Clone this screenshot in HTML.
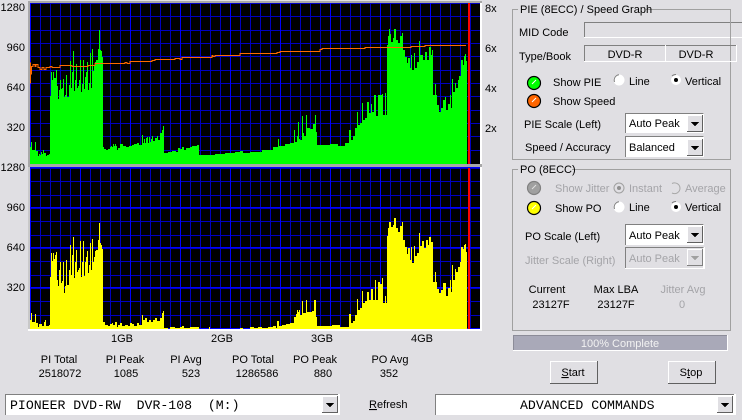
<!DOCTYPE html>
<html><head><meta charset="utf-8">
<style>
html,body{margin:0;padding:0;background:#e0dfe3;width:742px;height:420px;overflow:hidden}
svg{display:block}
text{font-family:"Liberation Sans",sans-serif;font-size:11px;fill:#000}
.m{text-anchor:middle}.g{fill:#a4a4a8}
.mono{font-family:"Liberation Mono",monospace;font-size:13.2px}
</style></head><body>
<svg width="742" height="420" viewBox="0 0 742 420" xmlns="http://www.w3.org/2000/svg" shape-rendering="crispEdges">
<defs>
<g id="gridh" stroke="#0000c0" stroke-width="1">
<path d="M30 .5H480M30 13.5H480M30 27.5H480M30 40.5H480M30 53.5H480M30 67.5H480M30 80.5H480M30 93.5H480M30 107.5H480M30 120.5H480M30 133.5H480M30 147.5H480"/>
</g>
<g id="gridv">
<path stroke="#0000c0" d="M40.5 0V161M50.5 0V161M60.5 0V161M70.5 0V161M90.5 0V161M100.5 0V161M110.5 0V161M120.5 0V161M140.5 0V161M150.5 0V161M160.5 0V161M170.5 0V161M190.5 0V161M200.5 0V161M210.5 0V161M220.5 0V161M240.5 0V161M250.5 0V161M260.5 0V161M270.5 0V161M290.5 0V161M300.5 0V161M310.5 0V161M320.5 0V161M340.5 0V161M350.5 0V161M360.5 0V161M370.5 0V161M390.5 0V161M400.5 0V161M410.5 0V161M420.5 0V161M440.5 0V161M450.5 0V161M460.5 0V161M470.5 0V161"/>
<path stroke="#0000ff" d="M30.5 0V161M80.5 0V161M130.5 0V161M180.5 0V161M230.5 0V161M280.5 0V161M330.5 0V161M380.5 0V161M430.5 0V161"/>
</g>
<g id="arrow">
<rect x="0" y="0" width="16" height="17" fill="#e0dfe3"/>
<path d="M0 .5H16M.5 0V17" stroke="#fff" fill="none"/>
<path d="M15.500 0V17M0 16.500H16" stroke="#606060" fill="none"/>
<path d="M4 7H12L8 11.500Z" fill="#000"/>
</g>
<g id="arrowd">
<rect x="0" y="0" width="16" height="17" fill="#e0dfe3"/>
<path d="M0 .5H16M.5 0V17" stroke="#fff" fill="none"/>
<path d="M15.500 0V17M0 16.500H16" stroke="#808080" fill="none"/>
<path d="M4 7H12L8 11.500Z" fill="#a0a0a0"/>
</g>
</defs>
<rect width="742" height="420" fill="#e0dfe3"/>

<!-- top chart -->
<rect x="28" y="1" width="454" height="166" fill="#a8a8a8"/>
<rect x="480" y="3" width="2" height="161" fill="#fff"/>
<rect x="30" y="3" width="450" height="161" fill="#000"/>
<use href="#gridh" y="3"/>
<use href="#gridv" y="3"/>
<path fill="#00ff00" d="M30 164V147H31V142H32V150H35V142H36V151H38V156H39V154H40V155H41V152H42V154H43V150H44V153H46V156H47V155H49V154H50V96H51V72H52V80H53V72H54V78H56V70H57V86H58V99H59V90H60V80H61V89H62V88H63V79H64V97H65V95H66V75H67V97H69V85H70V61H71V88H72V72H73V51H74V91H75V80H76V64H77V88H78V86H79V80H80V60H81V92H82V84H83V60H84V89H85V77H86V72H87V62H88V90H89V83H90V53H91V88H92V49H93V71H94V66H95V62H96V60H98V49H99V30H100V50H101V51H102V57H103V147H104V149H106V150H108V149H110V147H111V146H112V147H113V144H114V146H115V144H116V146H117V150H118V148H120V144H123V146H126V147H129V146H132V145H134V144H137V143H139V145H142V135H143V143H144V139H145V143H146V138H147V137H148V143H149V137H150V142H151V139H152V136H153V141H155V138H157V136H158V140H160V133H162V130H163V126H164V153H168V152H172V151H176V152H178V148H180V149H182V147H184V150H186V148H190V147H192V146H197V145H199V155H215V154H225V153H235V152H240V151H243V153H250V152H262V150H273V147H278V139H279V146H285V144H290V143H294V130H295V142H297V136H298V122H299V139H300V140H302V116H303V133H304V136H306V115H307V128H310V129H313V124H315V115H316V132H317V145H330V144H338V146H345V143H349V130H351V140H353V136H355V128H357V112H358V125H360V123H362V103H363V120H365V118H367V102H369V113H371V104H372V112H374V95H376V116H378V95H382V94H383V115H385V93H386V115H387V45H388V36H389V29H390V34H391V42H393V38H394V29H396V40H398V43H400V36H402V33H403V50H405V57H407V63H408V58H410V68H411V55H412V70H414V53H415V68H417V62H419V41H420V55H423V60H425V52H427V60H429V47H431V55H432V50H433V95H435V84H436V95H437V105H439V112H441V108H443V100H445V97H446V110H448V104H450V95H451V108H452V79H453V92H455V83H456V88H458V80H459V76H461V60H463V65H464V56H465V54H466V61H467V164Z"/>
<path fill="none" stroke="#ff6a00" stroke-width="1" transform="translate(0 .5)" d="M30.500 83V62M31.500 74V66H33V64H35V66H36V64H38V67H40V69H42V67H44V69H46V67H50V66H52V67H60V65H72V66H88V65H95V63H125V62H127V63H130V61H152V60H155V59H175V58H180V59H182V57H212V55H213V56H215V55H240V53H277V52H280V51H320V49H322V48H365V47H411V46H425V45H466"/>
<rect x="468" y="3" width="2" height="161" fill="#ff0000"/>

<!-- bottom chart -->
<rect x="28" y="167" width="454" height="164" fill="#fff"/>
<rect x="28" y="167" width="2" height="162" fill="#c8c8c8"/>
<rect x="30" y="167" width="450" height="162" fill="#000"/>
<use href="#gridh" y="168"/>
<use href="#gridv" y="167"/>
<path stroke="#0000ff" d="M30 207.500H480M30 247.500H480M30 287.500H480M30 328.500H480M30 167.500H480"/>
<path fill="#ffff00" d="M30 329V320H31V313H32V322H35V314H36V323H38V327H39V324H42V326H44V322H45V320H46V326H49V325H50V277H51V253H52V261H53V253H54V259H55V255H56V252H57V280H58V286H59V270H60V262H61V283H62V281H63V262H64V293H65V286H66V260H67V285H69V270H70V245H71V275H72V255H73V237H74V278H75V262H76V250H77V272H78V270H79V268H80V241H81V277H82V262H83V241H84V276H85V262H86V257H87V251H88V273H89V265H90V243H91V270H92V239H93V262H94V257H95V251H96V250H98V240H99V223H100V243H101V245H102V249H103V322H105V325H108V326H110V324H112V323H113V325H115V322H117V327H118V325H120V323H122V326H125V325H128V326H130V323H132V324H134V326H137V323H139V325H142V315H143V320H145V318H147V322H149V320H151V322H153V320H155V318H157V321H160V318H162V313H163V311H164V328H168V329H170V327H175V328H180V327H182V326H184V328H190V327H199V329H209V327H210V329H240V328H243V329H250V327H254V328H258V327H262V328H268V327H273V326H276V328H277V321H279V326H282V325H286V324H290V323H294V317H296V314H297V310H298V312H299V310H300V315H302V301H303V313H306V300H307V312H312V311H314V300H316V317H317V326H332V325H340V327H349V314H351V323H353V321H355V315H357V299H358V310H360V308H362V291H363V303H365V301H367V292H369V300H371V289H373V300H375V280H376V300H378V282H380V284H382V278H383V303H385V296H386V303H387V236H388V228H389V222H391V227H393V225H394V218H396V228H398V232H400V226H402V222H403V240H405V247H407V254H408V248H410V260H411V247H412V263H414V246H415V256H417V253H419V233H420V246H422V241H424V248H426V240H428V245H429V237H431V242H433V282H435V272H436V282H437V289H439V293H441V290H443V283H446V296H448V288H450V280H451V292H452V265H453V280H455V269H456V272H458V267H460V262H461V247H463V249H464V245H465V244H466V252H467V329Z"/>
<rect x="468" y="168" width="2" height="161" fill="#ff0000"/>

<!-- axis labels -->
<text x="25" y="11" text-anchor="end">1280</text>
<text x="25" y="51" text-anchor="end">960</text>
<text x="25" y="91" text-anchor="end">640</text>
<text x="25" y="131" text-anchor="end">320</text>
<text x="25" y="171" text-anchor="end">1280</text>
<text x="25" y="211" text-anchor="end">960</text>
<text x="25" y="251" text-anchor="end">640</text>
<text x="25" y="291" text-anchor="end">320</text>
<text x="485" y="12">8x</text>
<text x="485" y="52">6x</text>
<text x="485" y="92">4x</text>
<text x="485" y="132">2x</text>
<text class="m" x="122" y="342">1GB</text>
<text class="m" x="222" y="342">2GB</text>
<text class="m" x="322" y="342">3GB</text>
<text class="m" x="422" y="342">4GB</text>

<!-- stats -->
<text class="m" x="59" y="363">PI Total</text><text class="m" x="60" y="377">2518072</text>
<text class="m" x="125" y="363">PI Peak</text><text class="m" x="126" y="377">1085</text>
<text class="m" x="186" y="363">PI Avg</text><text class="m" x="191" y="377">523</text>
<text class="m" x="253" y="363">PO Total</text><text class="m" x="257" y="377">1286586</text>
<text class="m" x="315" y="363">PO Peak</text><text class="m" x="323" y="377">880</text>
<text class="m" x="390" y="363">PO Avg</text><text class="m" x="389" y="377">352</text>

<!-- PIE group -->
<rect x="512.500" y="9.500" width="218" height="150" fill="none" stroke="#a0a0a0"/>
<rect x="518" y="3" width="128" height="12" fill="#e0dfe3"/>
<text x="520" y="13">PIE (8ECC) / Speed Graph</text>
<text x="519" y="36">MID Code</text>
<rect x="584" y="22" width="158" height="16" fill="#e0dfe3"/>
<path d="M584.500 38V22.500H742" fill="none" stroke="#808080"/>
<path d="M584 37.500H742" stroke="#fff"/>
<path d="M730.500 22V38" stroke="#a0a0a0"/>
<text x="519" y="60">Type/Book</text>
<rect x="584" y="45" width="81" height="17" fill="#e0dfe3"/>
<path d="M584.500 62V45.500H665" fill="none" stroke="#808080"/>
<path d="M584 61.500H665.500V45" fill="none" stroke="#fff"/>
<path d="M666 45.500H736" stroke="#808080"/>
<path d="M666 61.500H736.500V45" fill="none" stroke="#fff"/>
<text class="m" x="625" y="58">DVD-R</text>
<text class="m" x="696" y="58">DVD-R</text>

<g shape-rendering="geometricPrecision">
<circle cx="534" cy="83" r="6.500" fill="#00ff00" stroke="#000" stroke-width="1.200"/><path d="M532 84L536 80" stroke="#fff" stroke-width="1"/>
<circle cx="534" cy="101" r="6.500" fill="#ff6600" stroke="#000" stroke-width="1.200"/><path d="M532 102L536 98" stroke="#fff" stroke-width="1"/>
<circle cx="534" cy="188" r="6.500" fill="#a0a0a0" stroke="#808080" stroke-width="1.200"/><path d="M532 189L536 185" stroke="#e0e0e0" stroke-width="1"/>
<circle cx="534" cy="208" r="6.500" fill="#ffff00" stroke="#000" stroke-width="1.200"/><path d="M532 209L536 205" stroke="#fff" stroke-width="1"/>
<circle cx="619" cy="80" r="5.500" fill="#fff"/><path d="M614.500 82A5.500 5.500 0 0 1 619 74.700" fill="none" stroke="#808080"/>
<circle cx="676" cy="80" r="5" fill="#fff"/><path d="M672 76A5.500 5.500 0 0 1 676 74.500" fill="none" stroke="#808080"/><circle cx="676" cy="80" r="2" fill="#000"/>
<circle cx="619" cy="207" r="5.500" fill="#fff"/><path d="M614.500 209A5.500 5.500 0 0 1 619 201.700" fill="none" stroke="#808080"/>
<circle cx="676" cy="207" r="5" fill="#fff"/><path d="M672 203A5.500 5.500 0 0 1 676 201.500" fill="none" stroke="#808080"/><circle cx="676" cy="207" r="2" fill="#000"/>
<circle cx="619" cy="188" r="5" fill="#e0dfe3" stroke="#a0a0a0"/><circle cx="619" cy="188" r="2" fill="#909090"/>
<path d="M672 183.500A5.500 5.500 0 0 1 680 188A5.500 5.500 0 0 1 672 193" fill="#e0dfe3" stroke="#a8a8a8"/>
</g>

<text x="553" y="86">Show PIE</text>
<text x="553" y="105">Show Speed</text>
<text x="629" y="85">Line</text>
<text x="685" y="85">Vertical</text>
<text x="524" y="128">PIE Scale (Left)</text>
<text x="525" y="151">Speed / Accuracy</text>

<rect x="625" y="113" width="79" height="20" fill="#fff"/>
<path d="M625.500 133V113.500H703.500" fill="none" stroke="#808080"/>
<use href="#arrow" x="687" y="115"/>
<text x="629" y="127">Auto Peak</text>
<rect x="625" y="136" width="79" height="21" fill="#fff"/>
<path d="M625.500 157V136.500H703.500" fill="none" stroke="#808080"/>
<use href="#arrow" x="687" y="139"/>
<text x="629" y="151">Balanced</text>

<!-- PO group -->
<rect x="512.500" y="169.500" width="218" height="161" fill="none" stroke="#a0a0a0"/>
<rect x="518" y="163" width="54" height="12" fill="#e0dfe3"/>
<text x="520" y="173">PO (8ECC)</text>
<text class="g" x="555" y="192">Show Jitter</text>
<text class="g" x="629" y="192">Instant</text>
<text class="g" x="685" y="192">Average</text>
<text x="555" y="212">Show PO</text>
<text x="629" y="211">Line</text>
<text x="685" y="211">Vertical</text>
<text x="525" y="240">PO Scale (Left)</text>
<text class="g" x="525" y="264">Jitter Scale (Right)</text>

<rect x="625" y="224" width="79" height="21" fill="#fff"/>
<path d="M625.500 245V224.500H703.500" fill="none" stroke="#808080"/>
<use href="#arrow" x="687" y="226"/>
<text x="629" y="239">Auto Peak</text>
<rect x="625" y="247" width="80" height="22" fill="#fff"/>
<rect x="626" y="248" width="77" height="20" fill="#e0dfe3"/>
<path d="M625.500 268V247.500H703.500" fill="none" stroke="#808080"/>
<use href="#arrowd" x="687" y="249"/>
<text class="g" x="629" y="262">Auto Peak</text>

<text class="m" x="547" y="293">Current</text>
<text class="m" x="551" y="308">23127F</text>
<text class="m" x="616" y="293">Max LBA</text>
<text class="m" x="616" y="308">23127F</text>
<text class="m g" x="683" y="293">Jitter Avg</text>
<text class="m g" x="682" y="308">0</text>

<!-- progress -->
<rect x="513" y="335" width="215" height="16" fill="#fff"/>
<rect x="513" y="335" width="214" height="15" fill="#a9a9b8"/>
<path d="M513 335.500H727M513.500 335V350" stroke="#8c8c98" fill="none"/>
<text class="m" x="620" y="347" style="fill:#f2f2f2">100% Complete</text>

<!-- buttons -->
<rect x="550" y="361" width="48" height="23" fill="#e0dfe3"/>
<path d="M550.500 384V361.500H598" stroke="#fff" fill="none"/>
<path d="M550 383.500H597.500V361" stroke="#606060" fill="none"/>
<text class="m" x="573" y="376"><tspan text-decoration="underline">S</tspan>tart</text>
<rect x="668" y="361" width="48" height="23" fill="#e0dfe3"/>
<path d="M668.500 384V361.500H716" stroke="#fff" fill="none"/>
<path d="M668 383.500H715.500V361" stroke="#606060" fill="none"/>
<text class="m" x="691" y="376">S<tspan text-decoration="underline">t</tspan>op</text>

<!-- bottom combos -->
<rect x="5" y="394" width="335" height="21" fill="#fff"/>
<path d="M5.500 415V394.500H338" stroke="#808080" fill="none"/>
<use href="#arrow" x="322" y="396"/>
<text class="mono" x="10" y="409" style="white-space:pre">PIONEER DVD-RW  DVR-108  (M:)</text>
<text x="369" y="408"><tspan text-decoration="underline">R</tspan>efresh</text>
<rect x="435" y="394" width="301" height="21" fill="#fff"/>
<path d="M435.500 415V394.500H734" stroke="#808080" fill="none"/>
<use href="#arrow" x="717" y="396"/>
<text class="mono" x="520" y="409">ADVANCED COMMANDS</text>
</svg>
</body></html>
